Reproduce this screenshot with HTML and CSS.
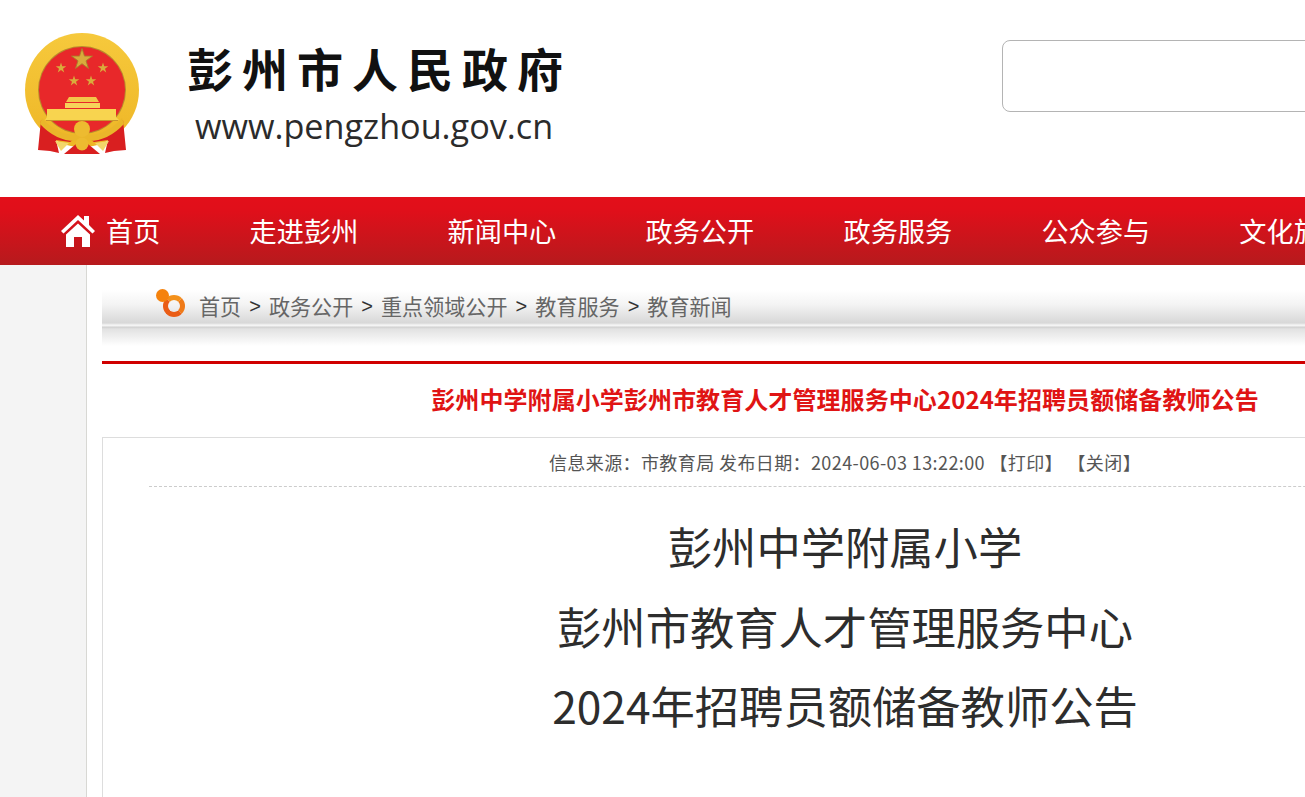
FILE: index.html
```html
<!DOCTYPE html>
<html lang="zh-CN">
<head>
    <meta charset="UTF-8">
    <meta name="viewport" content="width=device-width, initial-scale=1.0">
    <title>彭州市人民政府</title>
    <link rel="stylesheet" href="styles.css">
</head>
<body>
    <div class="header">
        <svg class="emblem" width="116" height="124" viewBox="0 0 116 124">
            <defs>
                <polygon id="star" points="0,-1 .225,-.309 .951,-.309 .363,.118 .588,.809 0,.382 -.588,.809 -.363,.118 -.951,-.309 -.225,-.309"></polygon>
                <linearGradient id="ring" x1="0" y1="0" x2="0" y2="1">
                    <stop offset="0" stop-color="#f6c93c"></stop>
                    <stop offset="1" stop-color="#eeb626"></stop>
                </linearGradient>
            </defs>
            <circle cx="58" cy="58" r="57" fill="url(#ring)"></circle>
            <circle cx="58" cy="58" r="44" fill="#b98a2c"></circle>
            <circle cx="58" cy="58" r="43" fill="#e8282a"></circle>
            <use href="#star" transform="translate(58 27.500) scale(11)" fill="#d9ab3c" stroke="#a9802c" stroke-width=".08"></use>
            <use href="#star" transform="translate(37 36) scale(5.500)" fill="#d9ab3c"></use>
            <use href="#star" transform="translate(79 36) scale(5.500)" fill="#d9ab3c"></use>
            <use href="#star" transform="translate(50 49) scale(5.500)" fill="#d9ab3c"></use>
            <use href="#star" transform="translate(67 49) scale(5.500)" fill="#d9ab3c"></use>
            <!-- gate -->
            <path d="M45 65 H72 L75 70 H42 Z" fill="#f3c64a"></path>
            <path d="M41 71 H76 V76 H41 Z" fill="#f7d25a"></path>
            <path d="M23 77 H92 V85 L95 88 H21 L23 85 Z" fill="#f8d44f"></path>
            <path d="M22 88 H94 V89 H22 Z" fill="#c8952c"></path>
            <!-- ribbons over the lower part of the ring -->
            <path d="M17 88 Q30 104 52 106 L46 110 L32 108 L35 121 L26 119 L14 118 Z" fill="#d91f20"></path>
            <path d="M99 88 Q86 104 64 106 L70 110 L84 108 L81 121 L90 119 L102 118 Z" fill="#d91f20"></path>
            <path d="M40 122 L52 112 H64 L76 122 Z" fill="#d91f20"></path>
            <!-- swag and wheat -->
            <path d="M18 86 Q32 102 50 103 Q58 92 66 103 Q84 102 98 86 L100 92 Q84 109 65 109 Q58 104 51 109 Q32 109 16 92 Z" fill="#eab62a"></path>
            <circle cx="58" cy="97" r="8" fill="#edbb30"></circle>
            <path d="M31 109 L45 111 L37 119 Z" fill="#f3d66a"></path>
            <path d="M85 109 L71 111 L79 119 Z" fill="#f3d66a"></path>
            <circle cx="58" cy="112" r="6.500" fill="#edbb30"></circle>
        </svg>
        <div class="site-name">
            <div class="site-title">彭州市人民政府</div>
            <div class="site-url">www.pengzhou.gov.cn</div>
        </div>
        <div class="search-box"></div>
    </div>

    <div class="nav">
        <a class="nav-item nav-home" href="#">
            <svg width="34" height="33" viewBox="0 0 34 33">
                <path d="M17 1 L23 6.500 V2 H28 V11 L34 17 L31.500 19.500 L17 6 L2.500 19.500 L0 17 Z" fill="#fff"></path>
                <path d="M17 9.500 L29 20.500 V33 H21 V23 H13 V33 H5 V20.500 Z" fill="#fff"></path>
            </svg>
            首页
        </a>
        <a class="nav-item" href="#">走进彭州</a>
        <a class="nav-item" href="#">新闻中心</a>
        <a class="nav-item" href="#">政务公开</a>
        <a class="nav-item" href="#">政务服务</a>
        <a class="nav-item" href="#">公众参与</a>
        <a class="nav-item" href="#">文化旅游</a>
    </div>

    <div class="page">
        <div class="sidebar"></div>
        <div class="main">
            <div class="crumbs">
                <span class="crumb-icon"><i></i></span>
                <a href="#">首页</a><span class="sep">&gt;</span>
                <a href="#">政务公开</a><span class="sep">&gt;</span>
                <a href="#">重点领域公开</a><span class="sep">&gt;</span>
                <a href="#">教育服务</a><span class="sep">&gt;</span>
                <a href="#">教育新闻</a>
            </div>
            <h2 class="red-title">彭州中学附属小学彭州市教育人才管理服务中心2024年招聘员额储备教师公告</h2>
            <div class="article">
                <div class="meta">信息来源：市教育局 发布日期：2024-06-03 13:22:00 【打印】 【关闭】</div>
                <h1 class="article-title">彭州中学附属小学<br>彭州市教育人才管理服务中心<br>2024年招聘员额储备教师公告</h1>
            </div>
        </div>
    </div>
</body>
</html>
```

FILE: styles.css
```css
html, body {
    margin: 0;
    padding: 0;
    height: 100%;
    overflow: hidden;
}
body {
    font-family: "Noto Sans CJK SC", "Noto Sans", sans-serif;
    background-color: #fff;
    color: #333;
}
a {
    color: inherit;
    text-decoration: none;
}
.header {
    display: flex;
    align-items: flex-start;
    height: 197px;
    padding-left: 24px;
    box-sizing: border-box;
}
.emblem {
    flex: none;
    margin-top: 32px;
}
.site-name {
    flex: none;
    width: 815px;
    margin-left: 47px;
    padding-top: 34px;
    color: #111;
}
.site-title {
    font-size: 46px;
    line-height: 66px;
    font-weight: 700;
    letter-spacing: 9px;
    white-space: nowrap;
}
.site-url {
    margin-top: 3px;
    padding-left: 8px;
    font-family: "Open Sans", sans-serif;
    font-size: 34.200px;
    line-height: 46px;
    color: #2b2b2b;
    white-space: nowrap;
}
.search-box {
    flex: none;
    width: 400px;
    height: 72px;
    margin-top: 40px;
    border: 1px solid #b4b4b4;
    border-radius: 8px;
    box-sizing: border-box;
}
.nav {
    display: flex;
    align-items: center;
    gap: 89.200px;
    height: 68px;
    padding: 0 0 2px 61px;
    box-sizing: border-box;
    background: linear-gradient(to bottom, #e30f1a, #e00f1a 20%, #b61a1d);
    white-space: nowrap;
}
.nav-item {
    display: flex;
    align-items: center;
    flex: none;
    gap: 11px;
    font-size: 27.200px;
    color: #fff;
}
.page {
    display: flex;
    height: 532px;
}
.sidebar {
    flex: none;
    width: 86px;
    background-color: #f4f4f4;
    border-right: 1px solid #d8d8d4;
}
.main {
    flex: none;
    width: 1486px;
    margin-left: 15px;
}
.crumbs {
    display: flex;
    align-items: center;
    height: 74px;
    margin-top: 25px;
    padding: 0 0 39px 53px;
    box-sizing: border-box;
    border-bottom: 3px solid #d00000;
    font-size: 21.100px;
    color: #666;
    white-space: nowrap;
    background: linear-gradient(to bottom, #fff 0, #f4f4f4 14px, #d8d8d8 33px, #f4f4f4 35px, #f4f4f4 36px, #cfcfcf 37px, #e2e2e2 39px, #fff 56px);
}
.crumb-icon {
    position: relative;
    flex: none;
    width: 22px;
    height: 22px;
    margin: 0 14px 0 8px;
    border-radius: 50%;
    border: 5px solid #ea5d16;
    border-top-color: #f3901a;
    border-right-color: #ef7a18;
    box-sizing: border-box;
}
.crumb-icon i {
    position: absolute;
    left: -12px;
    top: -11px;
    width: 13px;
    height: 13px;
    border-radius: 50%;
    background-color: #f5820c;
}
.sep {
    margin: 0 8px;
    font-family: "Liberation Sans", sans-serif;
    font-size: 20px;
    color: #333;
}
.red-title {
    margin: 0;
    height: 73px;
    line-height: 70px;
    font-size: 24px;
    font-weight: 700;
    letter-spacing: .08px;
    text-align: center;
    color: #e01414;
    white-space: nowrap;
}
.article {
    border: 1px solid #ddd;
    padding: 0 46px;
    height: 400px;
}
.meta {
    height: 48px;
    line-height: 48px;
    font-size: 18px;
    letter-spacing: .4px;
    text-align: center;
    color: #555;
    border-bottom: 1px dashed #ccc;
    white-space: nowrap;
}
.article-title {
    margin: 20px 0 0;
    font-size: 44.300px;
    font-weight: 400;
    line-height: 79.500px;
    text-align: center;
    color: #2d2d2d;
    white-space: nowrap;
}
```
